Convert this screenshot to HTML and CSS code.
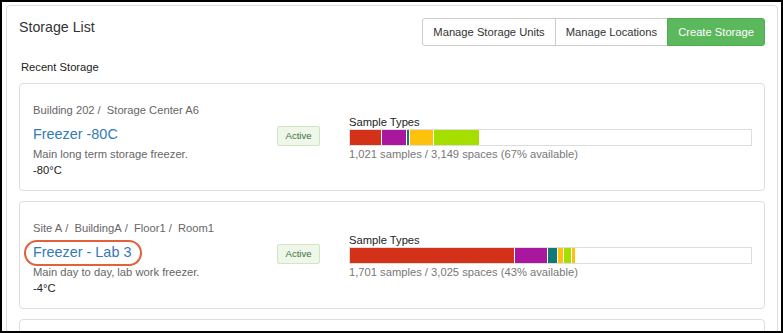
FILE: index.html
```html
<!DOCTYPE html>
<html lang="en">
<head>
    <meta charset="UTF-8">
    <meta name="viewport" content="width=device-width, initial-scale=1.0">
    <title>Storage List</title>
    <link rel="stylesheet" href="styles.css">
</head>
<body>
    <div class="frame">
        <div class="panel">
            <div class="panel-header">
                <h1 class="panel-title">Storage List</h1>
                <div class="btn-group">
                    <button class="btn">Manage Storage Units</button>
                    <button class="btn">Manage Locations</button>
                    <button class="btn btn-success">Create Storage</button>
                </div>
            </div>

            <h2 class="section-title">Recent Storage</h2>

            <div class="storage-card">
                <div class="storage-info">
                    <div class="breadcrumb">
                        <span class="crumb">Building 202</span>
                        <span class="crumb">Storage Center A6</span>
                    </div>
                    <div class="storage-name"><a href="#">Freezer -80C</a></div>
                    <div class="storage-desc">Main long term storage freezer.</div>
                    <div class="storage-temp">-80°C</div>
                </div>
                <div class="storage-status"><span class="badge">Active</span></div>
                <div class="storage-usage">
                    <div class="usage-label">Sample Types</div>
                    <div class="usage-bar">
                        <span class="seg seg-red" style="width: 7.98%"></span>
                        <span class="seg seg-purple" style="width: 6.23%"></span>
                        <span class="seg seg-teal" style="width: 0.75%"></span>
                        <span class="seg seg-yellow" style="width: 5.99%"></span>
                        <span class="seg seg-green" style="width: 11.22%"></span>
                    </div>
                    <div class="usage-caption">1,021 samples / 3,149 spaces (67% available)</div>
                </div>
            </div>

            <div class="storage-card">
                <div class="storage-info">
                    <div class="breadcrumb">
                        <span class="crumb">Site A</span>
                        <span class="crumb">BuildingA</span>
                        <span class="crumb">Floor1</span>
                        <span class="crumb">Room1</span>
                    </div>
                    <div class="storage-name"><a href="#"><span class="highlight">Freezer - Lab 3</span></a></div>
                    <div class="storage-desc">Main day to day, lab work freezer.</div>
                    <div class="storage-temp">-4°C</div>
                </div>
                <div class="storage-status"><span class="badge">Active</span></div>
                <div class="storage-usage">
                    <div class="usage-label">Sample Types</div>
                    <div class="usage-bar">
                        <span class="seg seg-red" style="width: 41.15%"></span>
                        <span class="seg seg-purple" style="width: 8.23%"></span>
                        <span class="seg seg-teal" style="width: 2.49%"></span>
                        <span class="seg seg-yellow" style="width: 1.50%"></span>
                        <span class="seg seg-green" style="width: 2.00%"></span>
                        <span class="seg seg-yellow" style="width: 0.75%"></span>
                    </div>
                    <div class="usage-caption">1,701 samples / 3,025 spaces (43% available)</div>
                </div>
            </div>

            <div class="storage-card storage-card-empty"></div>
        </div>
    </div>
</body>
</html>
```

FILE: styles.css
```css
body {
    margin: 0;
    font-family: "Liberation Sans", Arial, sans-serif;
    font-size: 11.2px;
    color: #333;
    background-color: #fff;
}

.frame {
    width: 783px;
    height: 333px;
    box-sizing: border-box;
    border: 2px solid #000;
    padding: 3px 3px 0 4px;
    overflow: hidden;
}

.panel {
    border: 1px solid #ddd;
    border-radius: 4px;
    padding: 12px 12px 0 12px;
    min-height: 400px;
}

.panel-header {
    display: flex;
    justify-content: space-between;
    align-items: flex-start;
}

.panel-title {
    margin: 0;
    font-size: 14.2px;
    font-weight: normal;
    line-height: 18px;
    color: #333;
}

.btn-group {
    display: flex;
}

.btn {
    height: 28px;
    padding: 0 10px;
    font-family: inherit;
    font-size: 11.2px;
    color: #333;
    background-color: #fff;
    border: 1px solid #ccc;
    margin-left: -1px;
    cursor: pointer;
}

.btn:first-child {
    margin-left: 0;
    border-radius: 3px 0 0 3px;
}

.btn:last-child {
    border-radius: 0 3px 3px 0;
}

.btn-success {
    color: #fff;
    background-color: #5cb85c;
    border-color: #4cae4c;
}

.section-title {
    margin: 13px 0 8px;
    padding-left: 2px;
    font-size: 11.2px;
    font-weight: normal;
    line-height: 16px;
    color: #222;
}

.storage-card {
    display: grid;
    grid-template-columns: 244px 72px 1fr;
    align-items: center;
    padding: 0 12px 0 13px;
    margin-bottom: 10px;
    border: 1px solid #ddd;
    border-radius: 4px;
}

.storage-card-empty {
    height: 100px;
}

.storage-info {
    padding: 18px 0 12px;
}

.breadcrumb {
    line-height: 16px;
    color: #666;
}

.crumb:not(:last-child)::after {
    content: "/";
    padding: 0 3px 0 3px;
}

.storage-name {
    margin-top: 5px;
    font-size: 14.4px;
    line-height: 22px;
}

.storage-name a {
    color: #337ab7;
    text-decoration: none;
}

.highlight {
    position: relative;
}

.highlight::after {
    content: "";
    position: absolute;
    top: -4px;
    bottom: -6px;
    left: -9px;
    right: -11px;
    border: 2px solid #e2603a;
    border-radius: 14px;
}

.storage-desc {
    margin-top: 1px;
    line-height: 16px;
    color: #666;
}

.storage-temp {
    line-height: 16px;
    color: #222;
}

.storage-status {
    justify-self: start;
    margin-bottom: 3px;
}

.badge {
    display: inline-block;
    padding: 0 7.5px;
    font-size: 9.6px;
    line-height: 18px;
    color: #3c6f3c;
    background-color: #eff7ea;
    border: 1px solid #cfe6c4;
    border-radius: 2px;
}

.storage-usage {
    margin-top: 3px;
}

.usage-label {
    line-height: 13px;
    color: #222;
}

.usage-bar {
    display: flex;
    height: 17px;
    box-sizing: border-box;
    border: 1px solid #ddd;
    background-color: #fff;
}

.seg {
    height: 100%;
    box-sizing: border-box;
    border-right: 1px solid #fff;
}

.seg:last-child {
    border-right: none;
}

.seg-red {
    background-color: #d43119;
}

.seg-purple {
    background-color: #a8179d;
}

.seg-teal {
    background-color: #107a79;
}

.seg-yellow {
    background-color: #fec20c;
}

.seg-green {
    background-color: #a5df00;
}

.usage-caption {
    line-height: 16px;
    color: #777;
}
```
